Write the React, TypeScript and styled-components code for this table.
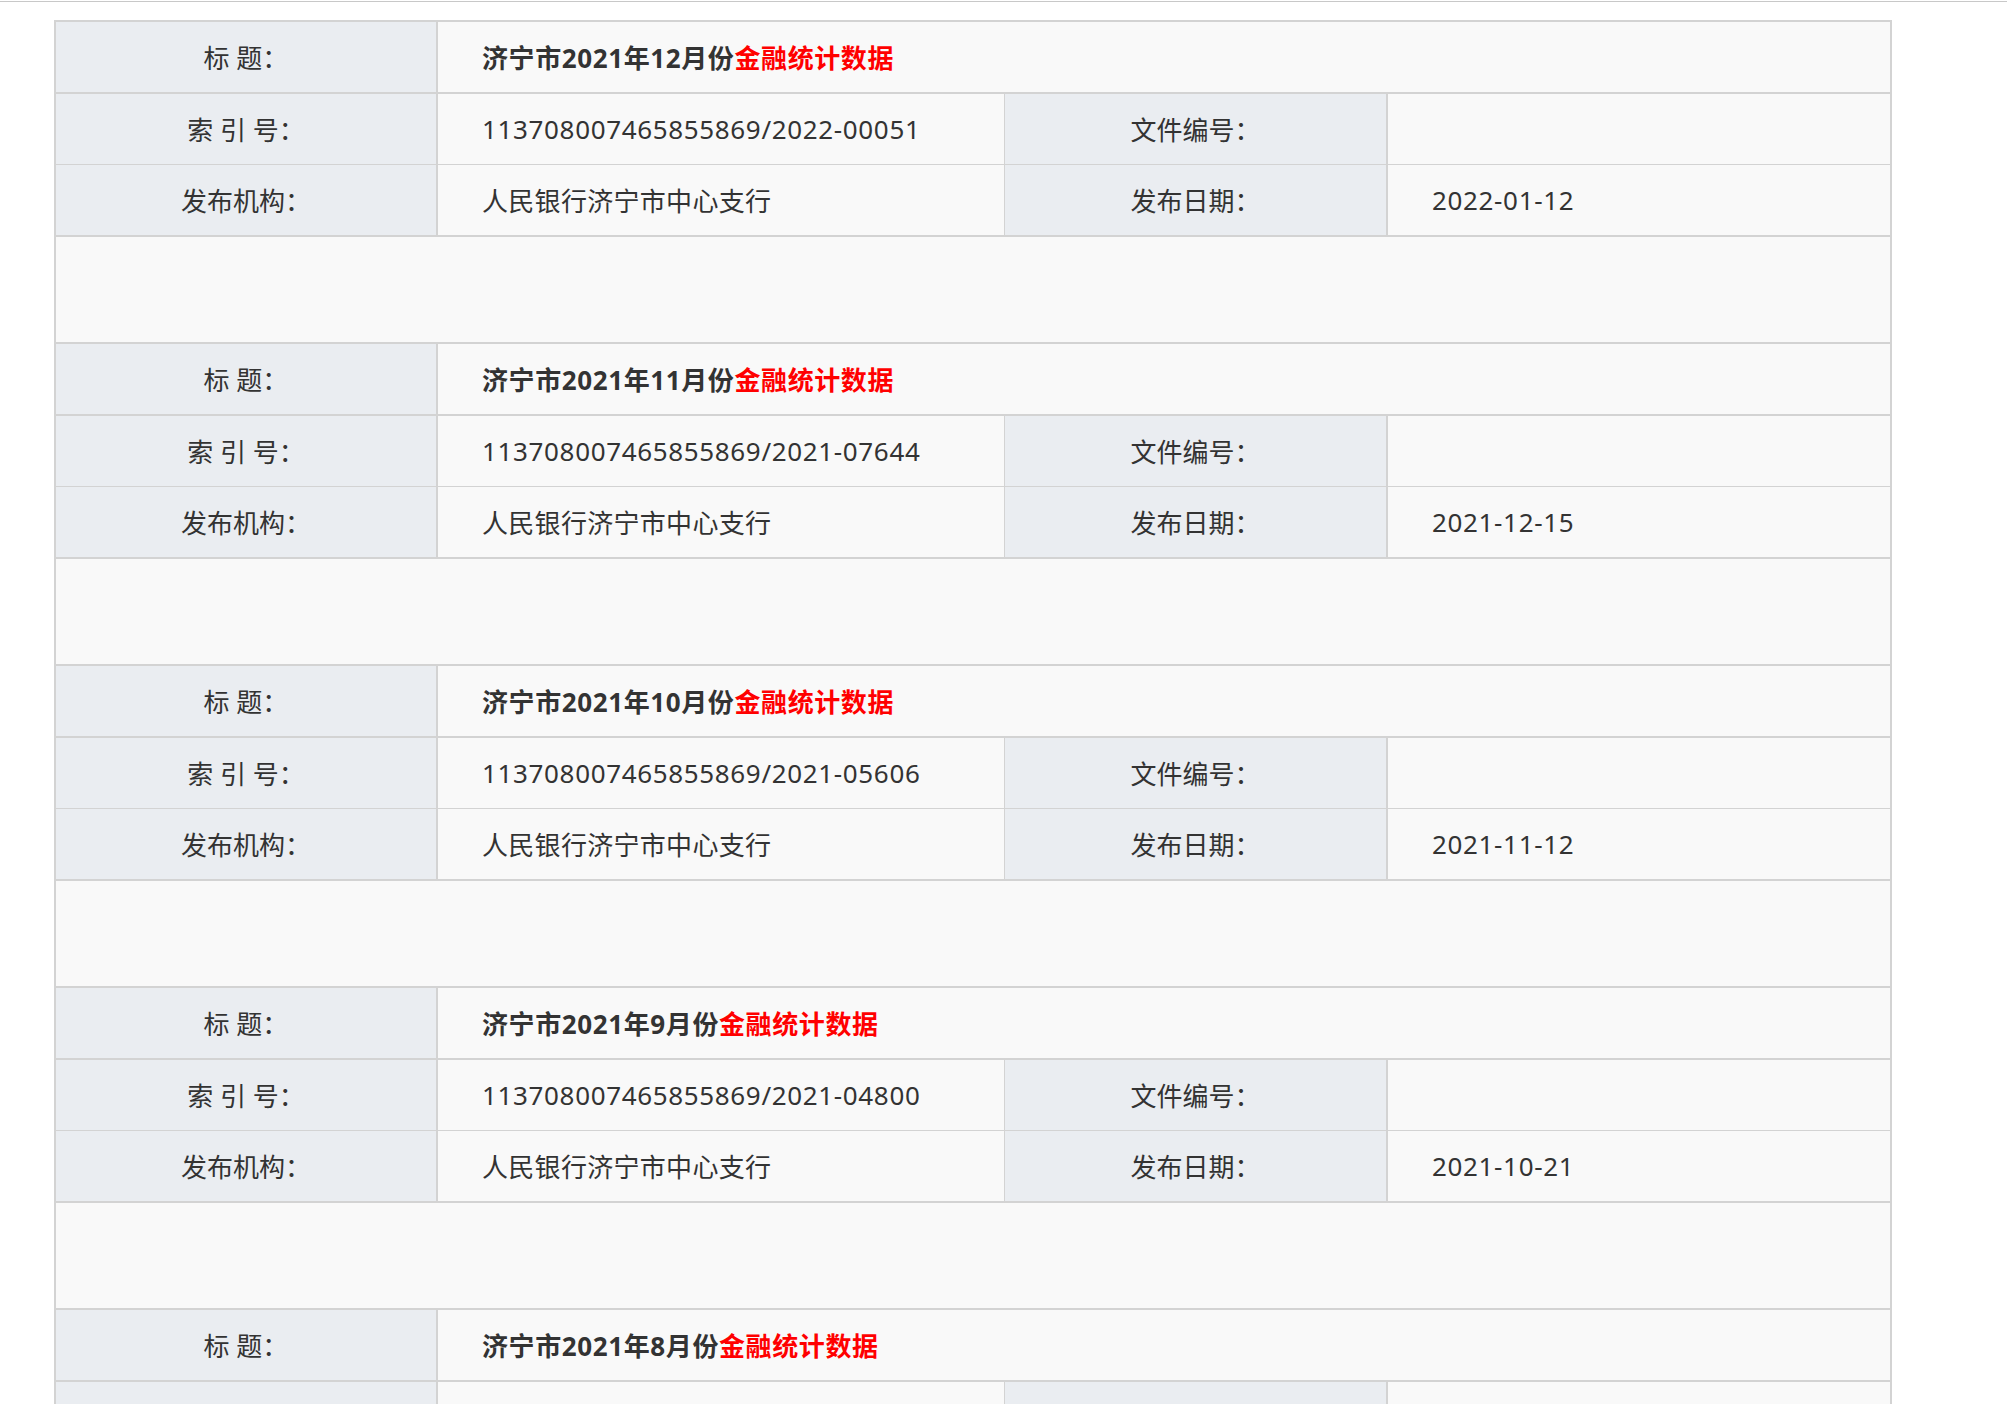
import * as React from 'react';
import styled, { createGlobalStyle } from 'styled-components';

const GlobalStyle = createGlobalStyle`
  html, body {
    margin: 0;
    padding: 0;
    background: #fff;
    overflow: hidden;
  }
  body {
    font-family: "Noto Sans", "Noto Sans CJK SC", sans-serif;
    color: #333;
  }
`;

const TopRule = styled.div`
  height: 1px;
  margin-top: 1px;
  background: #c8c8c8;
`;

const Sheet = styled.div`
  box-sizing: border-box;
  width: 1838px;
  margin: 18px 0 0 54px;
  border: 2px solid #d3d3d3;
  background: #f9f9f9;
`;

const TitleRow = styled.div`
  display: grid;
  grid-template-columns: 382px 1fr;
  border-bottom: 2px solid #d3d3d3;
`;

const InfoRow = styled.div<{ $thick?: boolean }>`
  display: grid;
  grid-template-columns: 382px 567px 383px 1fr;
  border-bottom: ${(p) => (p.$thick ? 2 : 1)}px solid #d3d3d3;
`;

const Label = styled.div<{ $edge?: number }>`
  height: 70px;
  display: flex;
  align-items: center;
  justify-content: center;
  background: #eaedf1;
  border-right: ${(p) => p.$edge ?? 2}px solid #d3d3d3;
  font-size: 26px;
  white-space: pre;
`;

const Value = styled.div<{ $edge?: number }>`
  height: 70px;
  display: flex;
  align-items: center;
  padding-left: 44px;
  background: #f9f9f9;
  border-right: ${(p) => p.$edge ?? 0}px solid #d3d3d3;
  font-size: 26px;
  letter-spacing: 0.3px;
  white-space: nowrap;
`;

const Num = styled.span`
  letter-spacing: 0.65px;
`;

const Title = styled.span`
  font-weight: 700;
  color: #333;
  letter-spacing: 0.6px;

  em {
    font-style: normal;
    color: #ff0000;
  }
`;

const Spacer = styled.div`
  height: 105px;
  border-bottom: 2px solid #d3d3d3;
`;

interface Record {
  month: string;
  index: string;
  date: string;
}

const records: Record[] = [
  { month: '12', index: '113708007465855869/2022-00051', date: '2022-01-12' },
  { month: '11', index: '113708007465855869/2021-07644', date: '2021-12-15' },
  { month: '10', index: '113708007465855869/2021-05606', date: '2021-11-12' },
  { month: '9', index: '113708007465855869/2021-04800', date: '2021-10-21' },
  { month: '8', index: '', date: '' },
];

const RecordBlock = ({ month, index, date }: Record) => (
  <>
    <TitleRow>
      <Label>标 题：</Label>
      <Value>
        <Title>
          济宁市2021年{month}月份<em>金融统计数据</em>
        </Title>
      </Value>
    </TitleRow>
    <InfoRow>
      <Label>索 引 号：</Label>
      <Value $edge={1}>
        <Num>{index}</Num>
      </Value>
      <Label>文件编号：</Label>
      <Value></Value>
    </InfoRow>
    <InfoRow $thick>
      <Label>发布机构：</Label>
      <Value $edge={1}>{index ? '人民银行济宁市中心支行' : ''}</Value>
      <Label>发布日期：</Label>
      <Value>
        <Num>{date}</Num>
      </Value>
    </InfoRow>
    <Spacer />
  </>
);

export default function App() {
  return (
    <>
      <GlobalStyle />
      <TopRule />
      <Sheet>
        {records.map((r) => (
          <RecordBlock key={r.month} {...r} />
        ))}
      </Sheet>
    </>
  );
}
